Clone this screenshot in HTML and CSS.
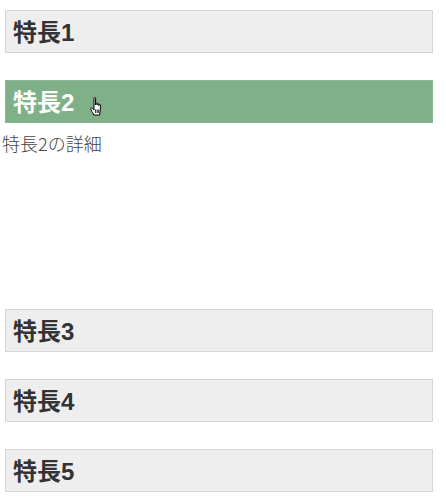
FILE: index.html
```html
<!DOCTYPE html>
<html lang="ja">
<head>
<meta charset="utf-8">
<link rel="stylesheet" href="styles.css">
</head>
<body>
<div class="accordion">
  <div class="item">
    <h3 class="head">特長1</h3>
  </div>
  <div class="item">
    <h3 class="head active">特長2
      <svg class="cursor" width="13" height="19" viewBox="0 0 13 19">
        <path d="M4 1.2 C4 0.3 5.6 0.3 5.6 1.2 L5.6 8 L5.6 6.6 C5.6 5.8 7.2 5.8 7.2 6.6 L7.2 8 L7.2 7.2 C7.2 6.4 8.8 6.4 8.8 7.2 L8.8 8.6 L8.8 8 C8.8 7.2 10.4 7.2 10.4 8 L10.4 12.5 C10.4 14.5 9.6 15.8 9.6 18 L3.6 18 C3.6 16.5 2 15 0.9 12.6 C0.4 11.4 1.4 10.6 2.2 11.3 L4 13 Z" fill="#fff" stroke="#000" stroke-width="1" stroke-linejoin="round"/>
        <path d="M5.6 12.5v3.5M7.2 12.5v3.5M8.8 12.5v3.5" stroke="#000" stroke-width="0.9"/>
      </svg>
    </h3>
    <div class="body">特長2の詳細</div>
  </div>
  <div class="item">
    <h3 class="head">特長3</h3>
  </div>
  <div class="item">
    <h3 class="head">特長4</h3>
  </div>
  <div class="item">
    <h3 class="head">特長5</h3>
  </div>
</div>
</body>
</html>
```
FILE: styles.css
```css
html, body {
  margin: 0;
  padding: 0;
  background: #fff;
}
.accordion {
  width: 428px;
  margin: 10px 0 0 5px;
  display: flex;
  flex-direction: column;
  gap: 27px;
  font-family: Arial, "Liberation Sans", "Noto Sans CJK JP", sans-serif;
}
.item {
  display: flex;
  flex-direction: column;
}
.head {
  position: relative;
  margin: 0;
  height: 43px;
  box-sizing: border-box;
  padding: 0 7px;
  line-height: 43px;
  font-size: 24px;
  font-weight: bold;
  color: #333;
  background: #eeeeee;
  border: 1px solid #d6d6d6;
}
.head.active {
  background: #80b088;
  border-color: #8cb894;
  color: #fff;
}
.cursor {
  position: absolute;
  left: 84px;
  top: 16px;
}
.body {
  height: 159px;
  box-sizing: border-box;
  padding-top: 9px;
  font-size: 18px;
  line-height: 22px;
  color: #444;
  font-family: "Noto Sans CJK JP", sans-serif;
  font-weight: 300;
  margin-left: -3px;
}
```
